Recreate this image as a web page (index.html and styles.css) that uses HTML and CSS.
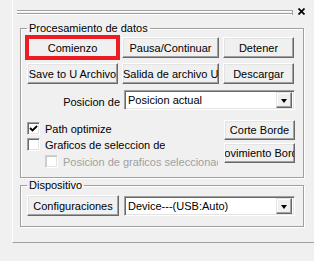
FILE: index.html
```html
<!DOCTYPE html>
<html lang="es">
<head>
  <meta charset="UTF-8">
  <title>Procesamiento de datos</title>
  <meta name="viewport" content="width=device-width, initial-scale=1">
  <link rel="stylesheet" href="styles.css">
</head>
<body>
  <div class="pane">
    <div class="caption">
      <span class="grip"></span>
      <svg class="close" width="7" height="7" viewBox="0 0 7 7"><path d="M0.5 0.5L6.5 6.5M6.5 0.5L0.5 6.5" stroke="#000" stroke-width="1.7"/></svg>
    </div>

    <fieldset class="group">
      <legend>Procesamiento de datos</legend>
      <div class="btn-grid">
        <button class="btn marked">Comienzo</button>
        <button class="btn">Pausa/Continuar</button>
        <button class="btn">Detener</button>
        <button class="btn">Save to U Archivo</button>
        <button class="btn">Salida de archivo U</button>
        <button class="btn">Descargar</button>
      </div>

      <div class="pos-row">
        <span class="pos-label">Posicion de</span>
        <div class="combo">
          <span class="combo-text">Posicion actual</span>
          <span class="combo-arrow"></span>
        </div>
      </div>

      <div class="opts">
        <div class="checks">
          <div class="check">
            <span class="box"><svg width="9" height="9" viewBox="0 0 9 9"><path d="M1 4L3.5 6.5L8 2" fill="none" stroke="#000" stroke-width="1.8"/></svg></span>
            <span class="check-text">Path optimize</span>
          </div>
          <div class="check">
            <span class="box"></span>
            <span class="check-text">Graficos de seleccion de</span>
          </div>
          <div class="check sub disabled">
            <span class="box"></span>
            <span class="check-text">Posicion de graficos seleccionados</span>
          </div>
        </div>
        <div class="side-btns">
          <button class="btn short"><span>Corte Borde</span></button>
          <button class="btn short"><span>Movimiento Borde</span></button>
        </div>
      </div>
    </fieldset>

    <fieldset class="group device">
      <legend>Dispositivo</legend>
      <div class="device-row">
        <button class="btn config">Configuraciones</button>
        <div class="combo">
          <span class="combo-text">Device---(USB:Auto)</span>
          <span class="combo-arrow"></span>
        </div>
      </div>
    </fieldset>
  </div>
</body>
</html>
```

FILE: styles.css
```css
body {
  margin: 0;
  background: #f0f0f0;
  font-family: 'Liberation Sans', Arial, sans-serif;
  font-size: 11px;
  color: #000;
}
.pane {
  margin-left: 12px;
  height: 243px;
  box-sizing: border-box;
  border-left: 1px solid #fff;
  border-bottom: 1px solid #a0a0a0;
}
.caption {
  display: flex; align-items: center;
  height: 22px; padding: 0 0 0 4px;
}
.grip {
  width: 275px; height: 5px;
  margin-top: 2px;
  background: linear-gradient(#a0a0a0 0 1px, #fff 1px 2px, transparent 2px 3px, #a0a0a0 3px 4px, #fff 4px 5px);
  border-right: 1px solid #a0a0a0;
}
.close { margin-left: 5px; margin-top: 1px; }

.group {
  margin: 0 10px 0 7px;
  padding: 2px 8px 6px 6px;
  border: 1px solid #a0a0a0;
  box-shadow: 1px 1px 0 #fff, inset 1px 1px 0 #fff;
  min-width: 0;
}
.group legend {
  padding: 0 2px;
  margin-left: 0;
  line-height: 13px;
}
.btn {
  font: inherit;
  color: #000;
  background: #f0f0f0;
  border: 1px solid;
  border-color: #fff #696969 #696969 #fff;
  box-shadow: inset -1px -1px 0 #a0a0a0, inset 1px 1px 0 #e3e3e3;
  padding: 0;
  height: 21px;
  white-space: nowrap;
  overflow: hidden;
}
.btn-grid {
  display: grid;
  grid-template-columns: 91px 97px 71px;
  column-gap: 4px;
  row-gap: 5px;
}
.marked {
  outline: 4px solid #ed1c24;
  outline-offset: -2px;
  position: relative;
}
.pos-row {
  display: flex; align-items: center;
  margin-top: 6px;
}
.pos-label {
  width: 93px; text-align: right; padding-right: 4px;
  padding-top: 3px;
}
.combo {
  flex: 1;
  display: flex; align-items: center;
  height: 20px;
  box-sizing: border-box;
  background: #fff;
  border: 1px solid;
  border-color: #a0a0a0 #fff #fff #a0a0a0;
  box-shadow: inset 1px 1px 0 #696969, inset -1px -1px 0 #e3e3e3;
  padding: 2px 2px 2px 3px;
}
.combo-text { flex: 1; }
.combo-arrow {
  width: 16px; height: 16px;
  box-sizing: border-box;
  background: #f0f0f0;
  border: 1px solid;
  border-color: #e3e3e3 #696969 #696969 #e3e3e3;
  box-shadow: inset -1px -1px 0 #a0a0a0, inset 1px 1px 0 #fff;
  position: relative;
}
.combo-arrow::after {
  content: "";
  position: absolute; left: 4px; top: 6px;
  border-left: 3.5px solid transparent;
  border-right: 3.5px solid transparent;
  border-top: 4px solid #000;
}
.opts {
  display: flex; justify-content: space-between;
  margin-top: 10px;
}
.checks { padding-top: 2px; width: 191px; }
.check {
  display: flex; align-items: center;
  height: 13px; margin-bottom: 3px;
}
.check.sub { margin-top: 4px; padding-left: 18px; }
.box {
  width: 13px; height: 13px;
  box-sizing: border-box;
  flex: none;
  background: #fff;
  border: 1px solid;
  border-color: #a0a0a0 #fff #fff #a0a0a0;
  box-shadow: inset 1px 1px 0 #696969, inset -1px -1px 0 #e3e3e3;
  display: flex; align-items: center; justify-content: center;
  margin-right: 5px;
}
.check-text { white-space: nowrap; overflow: hidden; }
.disabled { color: #a0a0a0; }
.disabled .box {
  box-shadow: inset 1px 1px 0 #c8c8c8, inset -1px -1px 0 #e3e3e3;
  border-color: #d0d0d0 #fff #fff #d0d0d0;
}
.side-btns {
  display: flex; flex-direction: column; gap: 3px;
  width: 71px;
}
.btn.short {
  height: 20px;
  display: flex; justify-content: center; align-items: center;
}
.btn.short span { flex: none; }
.device { margin-top: 1px; padding-top: 3px; padding-bottom: 10px; }
.device-row { display: flex; align-items: center; gap: 5px; }
.config { width: 92px; height: 21px; }
```
